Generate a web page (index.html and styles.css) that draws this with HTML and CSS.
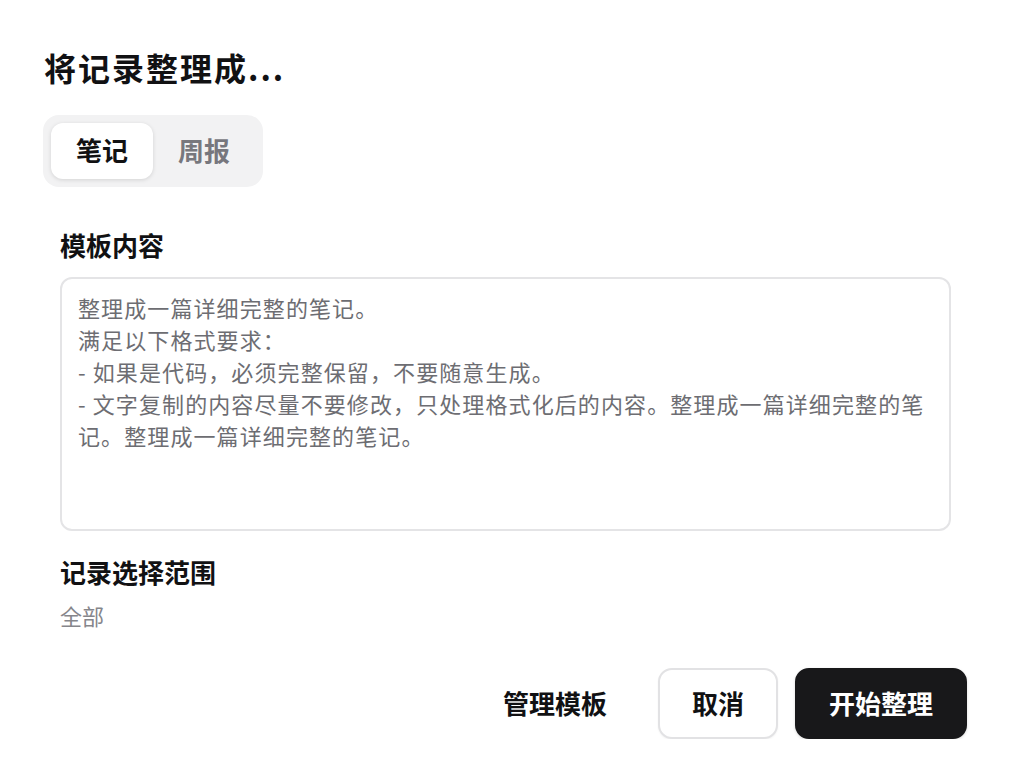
FILE: index.html
```html
<!DOCTYPE html>
<html lang="zh-CN">
<head>
<meta charset="utf-8">
<title>将记录整理成...</title>
<link rel="stylesheet" href="styles.css">
</head>
<body>
<div class="dialog">
  <h1 class="title">将记录整理成...</h1>
  <div class="tabs">
    <div class="tab tab-active">笔记</div>
    <div class="tab">周报</div>
  </div>
  <div class="section">
    <div class="label label-first">模板内容</div>
    <div class="editor">整理成一篇详细完整的笔记。
满足以下格式要求：
- 如果是代码，必须完整保留，不要随意生成。
- 文字复制的内容尽量不要修改，只处理格式化后的内容。整理成一篇详细完整的笔记。整理成一篇详细完整的笔记。</div>
    <div class="label label-second">记录选择范围</div>
    <div class="value">全部</div>
  </div>
  <div class="actions">
    <button class="btn btn-text">管理模板</button>
    <button class="btn btn-outline">取消</button>
    <button class="btn btn-primary">开始整理</button>
  </div>
</div>
</body>
</html>
```
FILE: styles.css
```css
* { box-sizing: border-box; }
html, body {
  margin: 0;
  padding: 0;
  background: #ffffff;
}
body {
  font-family: "Noto Sans CJK SC", "Noto Sans", sans-serif;
  color: #111113;
}
.dialog {
  width: 1010px;
  padding: 45px 43px 0 44px;
}
.title {
  margin: 0;
  font-size: 32px;
  line-height: 44px;
  font-weight: 700;
  letter-spacing: 2px;
  color: #111113;
}
.tabs {
  display: inline-flex;
  margin-top: 26px;
  margin-left: -1px;
  padding: 8px;
  background: #f2f2f3;
  border-radius: 16px;
}
.tab {
  height: 56px;
  padding: 0 25px;
  font-size: 26px;
  line-height: 54px;
  font-weight: 700;
  color: #77777d;
  border-radius: 12px;
}
.tab-active {
  background: #ffffff;
  color: #111113;
  box-shadow: 0 1px 4px rgba(0, 0, 0, 0.13);
}
.section {
  padding: 0 16px;
}
.label {
  font-size: 26px;
  line-height: 36px;
  font-weight: 700;
  color: #111113;
}
.label-first { margin-top: 40px; }
.label-second { margin-top: 23px; }
.editor {
  margin-top: 14px;
  height: 254px;
  border: 2px solid #e4e4e6;
  border-radius: 12px;
  padding: 12px 16px;
  font-size: 22px;
  line-height: 32px;
  letter-spacing: 1.1px;
  color: #6d6d72;
  white-space: pre-wrap;
}
.value {
  margin-top: 9px;
  font-size: 22px;
  line-height: 32px;
  color: #86868b;
}
.actions {
  display: flex;
  justify-content: flex-end;
  gap: 17px;
  margin-top: 37px;
}
.btn {
  height: 71px;
  padding: 0 32px 3px;
  font-family: inherit;
  font-size: 26px;
  font-weight: 700;
  border-radius: 14px;
  border: 2px solid transparent;
  background: transparent;
  color: #111113;
  cursor: pointer;
}
.btn-outline {
  border-color: #e2e2e4;
  background: #ffffff;
  box-shadow: 0 1px 2px rgba(0, 0, 0, 0.05);
}
.btn-primary {
  background: #18181a;
  border-color: #18181a;
  color: #ffffff;
  box-shadow: 0 1px 3px rgba(0, 0, 0, 0.15);
}
```
